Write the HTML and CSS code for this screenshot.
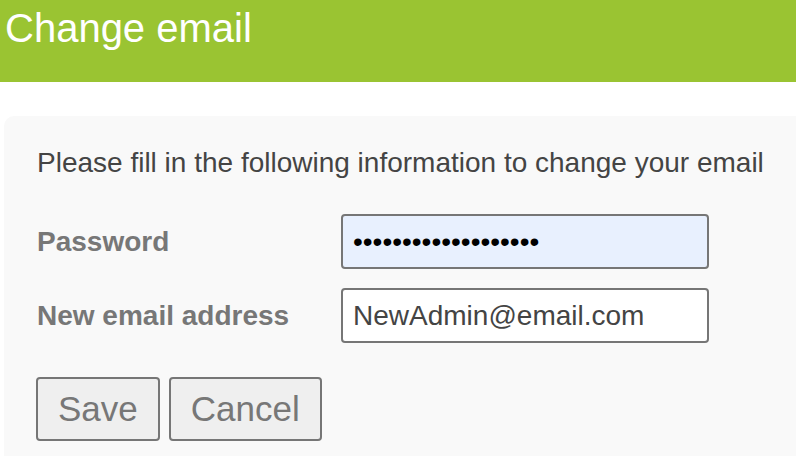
FILE: index.html
```html
<!DOCTYPE html>
<html lang="en">
<head>
<meta charset="utf-8">
<title>Change email</title>
<link rel="stylesheet" href="styles.css">
</head>
<body>
<header class="topbar">
  <h1 class="title">Change email</h1>
</header>
<main class="card">
  <p class="intro">Please fill in the following information to change your email</p>
  <form class="form">
    <label class="label" for="pw">Password</label>
    <input class="field field-autofill" id="pw" type="password" value="abcdefghijklmnopqrs">
    <label class="label" for="em">New email address</label>
    <input class="field" id="em" type="text" value="NewAdmin@email.com">
  </form>
  <div class="actions">
    <button class="btn" type="button">Save</button>
    <button class="btn" type="button">Cancel</button>
  </div>
</main>
</body>
</html>
```

FILE: styles.css
```css
html, body {
  margin: 0;
  padding: 0;
  background: #ffffff;
  font-family: "Liberation Sans", Arial, sans-serif;
}

.topbar {
  background: #9ac432;
  height: 82px;
  box-sizing: border-box;
  padding: 5px 5px 0;
}

.title {
  margin: 0;
  font-size: 40px;
  font-weight: normal;
  color: #ffffff;
  line-height: 46px;
}

.card {
  margin: 34px 0 0 4px;
  background: #f9f9f9;
  border-radius: 10px 0 0 0;
  padding: 31px 0 15px 33px;
}

.intro {
  margin: 0;
  font-size: 28px;
  line-height: 32px;
  color: #444444;
  white-space: nowrap;
}

.form {
  display: grid;
  grid-template-columns: 304px 368px;
  row-gap: 19px;
  align-items: center;
  margin-top: 35px;
}

.label {
  font-size: 28px;
  font-weight: bold;
  color: #777777;
  line-height: 32px;
}

.field {
  box-sizing: border-box;
  width: 368px;
  height: 55px;
  margin: 0;
  padding: 0 10px;
  border: 2px solid #767676;
  border-radius: 4px;
  background: #ffffff;
  font-family: "Liberation Sans", Arial, sans-serif;
  font-size: 28px;
  color: #444444;
  outline: none;
}

.field-autofill {
  background: #e8f0fe;
  color: #000000;
}

.actions {
  display: flex;
  gap: 9px;
  margin-top: 34px;
  margin-left: -1px;
}

.btn {
  box-sizing: border-box;
  height: 64px;
  padding: 0 20px;
  margin: 0;
  border: 2px solid #767676;
  border-radius: 4px;
  background: #efefef;
  font-family: "Liberation Sans", Arial, sans-serif;
  font-size: 35px;
  color: #777777;
}
```
